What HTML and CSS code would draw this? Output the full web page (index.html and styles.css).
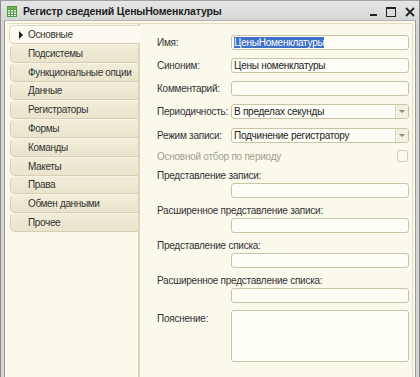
FILE: index.html
```html
<!DOCTYPE html>
<html lang="ru">
<head>
<meta charset="UTF-8" />
<title>Регистр сведений ЦеныНоменклатуры</title>
<link rel="stylesheet" href="styles.css">
</head>
<body>

<div class="window">
  <div class="titlebar">
    <svg class="app-icon" width="10" height="11" viewBox="0 0 10 11">
      <rect x="0.5" y="0.5" width="9" height="10" fill="#f4f8ee" stroke="#4f9a3c"/>
      <rect x="1" y="1" width="8" height="2" fill="#7dbb5e"/>
      <path d="M0.5 3.5H9.5M0.5 6H9.5M0.5 8.5H9.5M3.5 0.5V10.5M6.5 0.5V10.5" stroke="#4f9a3c" stroke-width="1" fill="none"/>
    </svg>
    <span class="title">Регистр сведений ЦеныНоменклатуры</span>
    <div class="win-buttons">
      <svg width="8" height="10" viewBox="0 0 8 10"><rect x="0" y="7" width="7" height="2" fill="#222"/></svg>
      <svg width="11" height="10" viewBox="0 0 11 10"><rect x="0.5" y="0.5" width="9" height="9" fill="none" stroke="#222"/><rect x="0" y="0" width="10" height="2" fill="#222"/></svg>
      <svg width="10" height="10" viewBox="0 0 10 10"><path d="M1 1L9 9M9 1L1 9" stroke="#222" stroke-width="1.8"/></svg>
    </div>
  </div>

  <div class="frame">
    <div class="page">
      <div class="tabs">
        <div class="tab active"><span class="marker"></span>Основные</div>
        <div class="tab">Подсистемы</div>
        <div class="tab">Функциональные опции</div>
        <div class="tab">Данные</div>
        <div class="tab">Регистраторы</div>
        <div class="tab">Формы</div>
        <div class="tab">Команды</div>
        <div class="tab">Макеты</div>
        <div class="tab">Права</div>
        <div class="tab">Обмен данными</div>
        <div class="tab">Прочее</div>
      </div>

      <div class="form">
        <div class="row">
          <span class="label">Имя:</span>
          <div class="field"><span class="selected">ЦеныНоменклатуры</span></div>
        </div>
        <div class="row">
          <span class="label">Синоним:</span>
          <div class="field">Цены номенклатуры</div>
        </div>
        <div class="row">
          <span class="label">Комментарий:</span>
          <div class="field"></div>
        </div>
        <div class="row">
          <span class="label">Периодичность:</span>
          <div class="field combo">
            <span class="combo-text">В пределах секунды</span>
            <span class="combo-btn"></span>
          </div>
        </div>
        <div class="row row-mode">
          <span class="label">Режим записи:</span>
          <div class="field combo">
            <span class="combo-text">Подчинение регистратору</span>
            <span class="combo-btn"></span>
          </div>
        </div>
        <div class="check-row">
          <span class="label disabled">Основной отбор по периоду</span>
          <span class="checkbox"></span>
        </div>

        <div class="group group-first">
          <div class="group-label">Представление записи:</div>
          <div class="field"></div>
        </div>
        <div class="group">
          <div class="group-label">Расширенное представление записи:</div>
          <div class="field"></div>
        </div>
        <div class="group">
          <div class="group-label">Представление списка:</div>
          <div class="field"></div>
        </div>
        <div class="group">
          <div class="group-label">Расширенное представление списка:</div>
          <div class="field"></div>
        </div>

        <div class="memo-row">
          <span class="label memo-label">Пояснение:</span>
          <div class="field memo"></div>
        </div>
      </div>
    </div>
  </div>
</div>

</body>
</html>
```

FILE: styles.css
```css
body {
  margin: 0;
  font-family: "Liberation Sans", Arial, sans-serif;
  font-size: 10px;
  letter-spacing: -0.25px;
  color: #2e2e2e;
  background: #ffffff;
}

.window {
  width: 420px;
  height: 377px;
  box-sizing: border-box;
  display: flex;
  flex-direction: column;
  background: #d4d4d4;
  border-left: 1px solid #8c8c8c;
  border-right: 1px solid #8c8c8c;
  border-top: 1px solid #a0a0a0;
  padding: 0 3px;
}

/* title bar */
.titlebar {
  height: 19px;
  display: flex;
  align-items: center;
  background: linear-gradient(#e6e6e6, #d6d6d6);
  margin: 0 -3px;
  padding: 0 4px 0 6px;
}

.app-icon {
  margin-right: 6px;
  margin-top: 1px;
}

.title {
  font-weight: bold;
  font-size: 10.5px;
  letter-spacing: -0.15px;
  color: #1e1e1e;
  flex: 1;
}

.win-buttons {
  display: flex;
  align-items: center;
  gap: 8px;
  margin-top: 3px;
}

/* body frame */
.frame {
  flex: 1;
  display: flex;
  background: #fbf9ec;
  border-top: 1px solid #b4b4b4;
  padding: 2px 3px 0 5px;
  box-shadow: inset 1px 0 0 #9c9c9c, inset -1px 0 0 #9c9c9c;
}

.page {
  flex: 1;
  display: flex;
  border-top: 1px solid #e3ddc3;
  border-right: 1px solid #e3ddc3;
}

/* left tabs */
.tabs {
  width: 131px;
  box-sizing: border-box;
  border-right: 2px solid #dbd5b9;
  padding-top: 1px;
}

.tab {
  height: 18.8px;
  box-sizing: border-box;
  display: flex;
  align-items: center;
  padding-left: 17px;
  margin-left: 1px;
  background: linear-gradient(#f1edd9, #e9e4cb);
  border: 1px solid #d6d0b3;
  border-right: none;
  border-top-color: #f6f3e4;
  border-radius: 5px 0 0 5px;
  color: #333;
  letter-spacing: -0.35px;
  white-space: nowrap;
}

.tab.active {
  height: 19px;
  margin-left: 0;
  margin-right: -2px;
  padding-left: 9px;
  background: #fdfbf1;
  border-color: #ddd7bb;
  border-bottom-color: #d2cbae;
  box-shadow: inset 1px 1px 0 #ffffff;
}

.marker {
  width: 0;
  height: 0;
  border-left: 4px solid #1e1e1e;
  border-top: 4px solid transparent;
  border-bottom: 4px solid transparent;
  margin-right: 5px;
}

/* form */
.form {
  flex: 1;
  display: flex;
  flex-direction: column;
  padding: 11px 3px 0 17px;
}

.row {
  display: flex;
  align-items: center;
  margin-bottom: 8px;
}

.row-mode {
  margin-top: 1px;
  margin-bottom: 7px;
}

.label {
  width: 74px;
  flex-shrink: 0;
  white-space: nowrap;
  color: #333;
}

.label.disabled {
  color: #a39e8c;
  flex: 1;
}

.field {
  flex: 1;
  height: 15px;
  box-sizing: border-box;
  border: 1px solid #cbc4a3;
  border-radius: 3px;
  background: #fefdf6;
  display: flex;
  align-items: center;
  padding-left: 2px;
  color: #222;
  white-space: nowrap;
}

.selected {
  background: #3e70c8;
  color: #ffffff;
  line-height: 11px;
}

.combo {
  padding-right: 0;
}

.combo-text {
  flex: 1;
}

.combo-btn {
  width: 12px;
  height: 100%;
  border-left: 1px solid #ddd7bd;
  background: #f3f0e2;
  border-radius: 0 2px 2px 0;
  display: flex;
  align-items: center;
  justify-content: center;
}

.combo-btn::after {
  content: "";
  border-top: 3px solid #8d8a80;
  border-left: 3px solid transparent;
  border-right: 3px solid transparent;
}

.check-row {
  display: flex;
  align-items: center;
  height: 12px;
  padding-right: 1px;
}

.checkbox {
  width: 11px;
  height: 12px;
  box-sizing: border-box;
  border: 1px solid #d7d0b4;
  border-radius: 2px;
  background: #fbf9ee;
}

.group {
  display: flex;
  flex-direction: column;
  margin-top: 6px;
}

.group-first {
  margin-top: 7px;
}

.group-label {
  height: 13px;
  line-height: 13px;
  margin-bottom: 1px;
  color: #333;
  white-space: nowrap;
}

.group .field {
  margin-left: 74px;
  flex: none;
}

.memo-row {
  display: flex;
  align-items: flex-start;
  margin-top: 7px;
}

.memo-label {
  padding-top: 3px;
}

.memo {
  height: 52px;
}
```
